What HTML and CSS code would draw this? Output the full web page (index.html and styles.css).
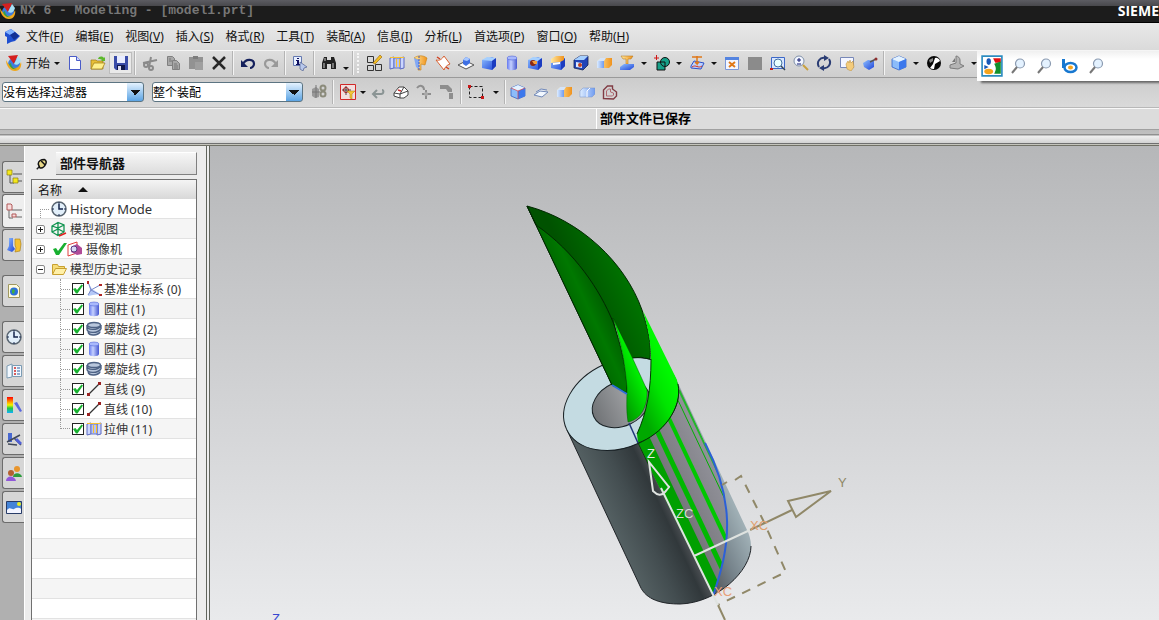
FILE: index.html
```html
<!DOCTYPE html>
<html lang="zh-CN">
<head>
  <meta charset="UTF-8">
  <meta name="viewport" content="width=device-width, initial-scale=1.0">
  <title>NX 6 - Modeling - [model1.prt]</title>
  <link rel="stylesheet" href="styles.css">
</head>
<body>
  <!-- 图标 -->
  <svg class="sprite" aria-hidden="true">
    <defs>
      <linearGradient id="gBlue" x1="0" x2="1" y1="0" y2="1"><stop offset="0" stop-color="#8fc0ff"/><stop offset="1" stop-color="#1d43d8"/></linearGradient>
      <linearGradient id="gPale" x1="0" x2="1"><stop offset="0" stop-color="#dcecff"/><stop offset="1" stop-color="#6f9bf0"/></linearGradient>
      <linearGradient id="gCyl" x1="0" x2="1"><stop offset="0" stop-color="#6478f0"/><stop offset=".4" stop-color="#c4d0ff"/><stop offset="1" stop-color="#4455d0"/></linearGradient>
      <linearGradient id="gOrange" x1="0" x2="1"><stop offset="0" stop-color="#ffe9a0"/><stop offset="1" stop-color="#f0921c"/></linearGradient>
      <linearGradient id="gRain" x1="0" x2="0" y1="0" y2="1"><stop offset="0" stop-color="#f00"/><stop offset=".35" stop-color="#ffb000"/><stop offset=".5" stop-color="#f4f400"/><stop offset=".7" stop-color="#20c840"/><stop offset="1" stop-color="#10b0ff"/></linearGradient>
    </defs>
    <symbol id="nx" viewBox="0 0 16 16"><circle cx="8" cy="9" r="6" fill="#3c7ce0"/><path d="M0 5c0 6 4 11 9 11 5 0 7-5 6-9-1 3-3 6-6 6-4 0-7-4-9-8z" fill="#f0a81c"/><path d="M3 9c1 4 4 6 8 5-3 0-6-3-6-6z" fill="#35a04a"/><path d="M2 1l10-1-4 9z" fill="#d42020"/><path d="M8 9l4-8 3 4c-1 4-4 6-7 4z" fill="#a8e0f4"/></symbol>
    <symbol id="part" viewBox="0 0 16 16"><path d="M1 4l6-3 4 3 5 4-5 5-4 1-4 2V9L1 8z" fill="#1e4fd0"/><path d="M1 4l6-3 4 3-5 3z" fill="#7fb0ff"/><path d="M6 7l5-3 4 4-5 4z" fill="#123094"/></symbol>
    <symbol id="new" viewBox="0 0 16 16"><path d="M2.500 1.500h7l4 4v9h-11z" fill="#fff" stroke="#4a5cc8"/><path d="M9.500 1.500v4h4" fill="#cfd8ff" stroke="#4a5cc8"/></symbol>
    <symbol id="open" viewBox="0 0 16 16"><path d="M1 14V5h5l1 1h6v8z" fill="#e8bf38" stroke="#9c7a14" stroke-width=".7"/><path d="M1 14l3-6h11l-3 6z" fill="#fff08c" stroke="#9c7a14" stroke-width=".7"/><path d="M8 4c1-3 4-3 6-1l1-1v4h-4l1-1c-1-1-2-1-4-1z" fill="#5cb82c"/></symbol>
    <symbol id="save" viewBox="0 0 16 16"><path d="M1 1h14v14H3l-2-2z" fill="#3a4ca8"/><path d="M4 1h8v7H4z" fill="#e8ecff"/><path d="M4 10h8v5H4z" fill="#10184c"/><path d="M5 11h3v4H5z" fill="#dde"/></symbol>
    <symbol id="cut" viewBox="0 0 16 16"><g fill="none" stroke="#8a8a8a" stroke-width="2"><path d="M1 8l14-3M9 2L7 12"/><circle cx="4" cy="10" r="2"/><circle cx="9" cy="13" r="2"/></g></symbol>
    <symbol id="copy" viewBox="0 0 16 16"><g fill="#a8a8a8" stroke="#808080"><path d="M2.500 1.500h5l2 2v7h-7z"/><path d="M7.500 5.500h4l3 3v6h-7z"/></g><path d="M9 9h3M9 11h4M9 13h4M4 4h2M4 6h3" stroke="#777"/></symbol>
    <symbol id="paste" viewBox="0 0 16 16"><path d="M1 2h14v12H1z" fill="#929292"/><path d="M5 1h5v3H5z" fill="#7c7c7c"/><path d="M7 7h8v8H7z" fill="#9f9f9f"/></symbol>
    <symbol id="del" viewBox="0 0 16 16"><path d="M2 2l12 12M14 2L2 14" stroke="#282828" stroke-width="2.500"/></symbol>
    <symbol id="undo" viewBox="0 0 16 16"><path d="M3 9c3-6 11-5 11 0 0 2-2 4-4 4" fill="none" stroke="#14205c" stroke-width="2.200"/><path d="M1 5v7h7z" fill="#14205c"/></symbol>
    <symbol id="redo" viewBox="0 0 16 16"><path d="M13 9C10 3 2 4 2 9c0 2 2 4 4 4" fill="none" stroke="#999" stroke-width="2.200"/><path d="M15 5v7H8z" fill="#999"/></symbol>
    <symbol id="info" viewBox="0 0 16 16"><path d="M1.500 1.500h8v9h-8z" fill="#e8f0ff" stroke="#6478b0"/><path d="M5 3h2v1H5zM4 5h3v4h1v1H4V9h1V6H4z" fill="#101060"/><path d="M8 7l7 5-3 1-1 3-3-2z" fill="#b8c8ec" stroke="#506090" stroke-width=".7"/></symbol>
    <symbol id="find" viewBox="0 0 16 16"><path d="M3 2h3v3h4V2h3l2 6v6h-5V9H6v5H1V8z" fill="#222"/><path d="M3 8v5M12 8v5M4 3v3" stroke="#ccc"/></symbol>
    <symbol id="sketch" viewBox="0 0 16 16"><path d="M1.500 1.500h6v6h-6zM1.500 10.500h6v5h-6zM9.500 9.500h6v6h-6z" fill="none" stroke="#333"/><path d="M7 8l7-8 2 2-7 7z" fill="#f4c020" stroke="#95600c" stroke-width=".6"/></symbol>
    <symbol id="extrude" viewBox="0 0 16 16"><path d="M1 3l4-1v11l-4 1zM11 3l4-1v11l-4 1z" fill="#cbd6ff" stroke="#5a68c0"/><path d="M5 3h6v10H5z" fill="#b4c2fa" stroke="#6a78c8"/><path d="M7 4h1v8H7zM10 4h1v8h-1zM1 2h14v1H1z" fill="#f6c030"/></symbol>
    <symbol id="revolve" viewBox="0 0 16 16"><path d="M2 3c4-3 9-3 13 0l-2 7-4-1v6H6V5z" fill="url(#gOrange)" stroke="#c78210" stroke-width=".6"/><path d="M2 3l5 2v9l-3-2z" fill="#82a8f4"/><path d="M7 1v14" stroke="#3858c8" stroke-dasharray="2 1"/></symbol>
    <symbol id="sheet" viewBox="0 0 16 16"><path d="M1 5c4 1 6-1 8-4l6 8c-3 1-5 3-6 6z" fill="#fff" stroke="#d86030"/><path d="M2 2l3 2M14 14l-3-2" stroke="#d04020" stroke-width="1.500"/></symbol>
    <symbol id="datum" viewBox="0 0 16 16"><path d="M0 10l8-4 8 4-8 4z" fill="#fff" stroke="#555"/><path d="M5 5l3-3 4 2v4l-4 3-3-2z" fill="#3f70e4"/><path d="M5 5l3-3 4 2-3 2z" fill="#a8c8ff"/></symbol>
    <symbol id="cube" viewBox="0 0 16 16"><path d="M1 5l10-3 4 2v7l-4 4-10-2z" fill="url(#gBlue)"/><path d="M1 5l5-3 9 1-4 3z" fill="#a6d0ff"/><path d="M11 6l4-3v8l-4 4z" fill="#1c3cc0"/></symbol>
    <symbol id="cyl" viewBox="0 0 16 16"><path d="M3 3v10c0 3 10 3 10 0V3z" fill="url(#gCyl)"/><ellipse cx="8" cy="3" rx="5" ry="2" fill="#a8b8fc" stroke="#5468d8" stroke-width=".6"/></symbol>
    <symbol id="hole" viewBox="0 0 16 16"><use href="#cube"/><circle cx="6" cy="8" r="3" fill="#8c2814"/><path d="M5 6h5v3H7z" fill="#f4a040"/></symbol>
    <symbol id="boss" viewBox="0 0 16 16"><use href="#cube"/><path d="M1 4l5-3h8v4l-4 2-9 1z" fill="url(#gOrange)"/><path d="M3 8l7-1v2L3 10z" fill="#fff"/></symbol>
    <symbol id="shell" viewBox="0 0 16 16"><path d="M1 5l6-4h8v9l-5 5-9-2z" fill="#2144b8" stroke="#142454" stroke-width=".8"/><path d="M1 5l6-4h8l-4 4z" fill="#a6d0ff"/><path d="M3 7l6 1v5l-6-1z" fill="#dce8ff"/><circle cx="7" cy="10" r="2" fill="#c04020"/></symbol>
    <symbol id="blend" viewBox="0 0 16 16"><path d="M1 6l3-3h12v7l-3 3H1z" fill="url(#gOrange)"/><path d="M1 6h7v7H1z" fill="url(#gPale)"/><path d="M1 6l3-3h6L8 6z" fill="#d4e4fa"/></symbol>
    <symbol id="box" viewBox="0 0 16 16"><path d="M1 7l3-3h12v6l-3 3H1z" fill="url(#gPale)" stroke="#7590c8" stroke-width=".5"/><path d="M8 13V7l3-3" stroke="#fff" fill="none"/></symbol>
    <symbol id="trim" viewBox="0 0 16 16"><path d="M2 1h12l-2 3H9v5H7V4H4z" fill="url(#gOrange)" stroke="#b07010" stroke-width=".5"/><path d="M1 12l4-3h10v3l-4 3H1z" fill="url(#gBlue)"/></symbol>
    <symbol id="bool" viewBox="0 0 16 16"><path d="M3 7h8v8H3z" fill="#16a088" stroke="#111"/><circle cx="11" cy="7" r="4.500" fill="#16a088" stroke="#111"/><path d="M6 7h5v4" fill="none" stroke="#111"/><path d="M0 3h5M2.500 0v5" stroke="#d01818"/></symbol>
    <symbol id="curve" viewBox="0 0 16 16"><path d="M2 11l3-5 10 2-3 6-10-1z" fill="#bcd2ff" stroke="#2c50c8"/><path d="M3 12c4-3 6 2 10-1" stroke="#d03020" fill="none"/><path d="M3 2h10M8 1v8l-2-2M8 9l2-2" stroke="#e07818" stroke-width="1.500" fill="none"/></symbol>
    <symbol id="fit" viewBox="0 0 16 16"><path d="M1.500 2.500h13v12h-13z" fill="#f4f6ff" stroke="#7c98d8"/><path d="M1 2h14v3H1z" fill="#5484e0"/><path d="M5 7l6 5M11 7l-6 5" stroke="#e07818" stroke-width="2"/></symbol>
    <symbol id="gray" viewBox="0 0 16 16"><path d="M1 2h14v13H1z" fill="#8b8b8b"/></symbol>
    <symbol id="zoomwin" viewBox="0 0 16 16"><path d="M1.500 2.500h13v11h-13z" fill="#d8e6ff" stroke="#3c68c8"/><circle cx="8" cy="8" r="4" fill="#eaffff" stroke="#4470a0"/><path d="M11 11l4 4" stroke="#345" stroke-width="1.500"/><path d="M0 13h3v2H0z" fill="#c02020"/></symbol>
    <symbol id="zoom" viewBox="0 0 16 16"><circle cx="6" cy="6" r="5" fill="#f2f6ff" stroke="#8090a8"/><path d="M6 3v4M4 5h4M4 9h4" stroke="#101870"/><path d="M10 10l5 5" stroke="#c8a040" stroke-width="2"/></symbol>
    <symbol id="rotate" viewBox="0 0 16 16"><path d="M3 12C0 7 4 2 9 3M13 4c3 5-1 10-6 9" fill="none" stroke="#2b3d74" stroke-width="2"/><path d="M8 0l5 3-5 3zM8 16l-5-3 5-3z" fill="#2b3d74"/></symbol>
    <symbol id="pan" viewBox="0 0 16 16"><path d="M1.500 2.500h13v10h-13z" fill="#f4f6ff" stroke="#7888b8"/><path d="M7 9l2-3 1 2 1-3 1 3 2-2 1 6-3 4-4-2z" fill="#f4cc7c" stroke="#b88830" stroke-width=".5"/></symbol>
    <symbol id="persp" viewBox="0 0 16 16"><path d="M1 8l5-3 6 1v6l-5 3-5-3z" fill="url(#gBlue)"/><path d="M8 7l6-3" stroke="#555" stroke-width="1.500"/><circle cx="14" cy="4" r="1.500" fill="#903030"/></symbol>
    <symbol id="shade" viewBox="0 0 16 16"><path d="M1 4l7-3 7 3v8l-7 3-7-3z" fill="#8cbcfa" stroke="#2456c0" stroke-width=".7"/><path d="M1 4l7-3 7 3-7 3z" fill="#e4f2ff"/><path d="M8 7l7-3v8l-7 3z" fill="#3c78ec"/></symbol>
    <symbol id="ball" viewBox="0 0 16 16"><circle cx="8" cy="8" r="7" fill="#080808"/><path d="M9 3a4 4 0 0 1 5 3l-5 3-1 5a6 6 0 0 1-4-1l3-4 1-3z" fill="#fff"/><path d="M3 5l4-2v3L4 8z" fill="#888"/></symbol>
    <symbol id="section" viewBox="0 0 16 16"><path d="M1 10l6-2V1c2 0 4 2 4 4v4l4 2-6 3-8-1z" fill="#b4b4b4" stroke="#7b7b7b"/><path d="M3 7l3-4v4z" fill="#777"/></symbol>
    <symbol id="google" viewBox="0 0 20 20"><path d="M1 1h18v18H1z" fill="#fff" stroke="#2c8cc0" stroke-width="1.500"/><path d="M11 3h7v4h-5z" fill="#e01010"/><path d="M12 8l6-2v11h-6c2-4 2-5 0-9z" fill="#12902c"/><ellipse cx="7" cy="6" rx="2" ry="3" fill="#1858b8"/><path d="M3 9l4 2-4 2z" fill="#1858b8"/><ellipse cx="7" cy="15" rx="4" ry="2.500" fill="#f4a41c"/></symbol>
    <symbol id="mag" viewBox="0 0 16 16"><circle cx="10" cy="5.500" r="4.500" fill="#e4f2ff" stroke="#8a9ab0" stroke-width="1.200"/><path d="M7 9l-5 6" stroke="#777" stroke-width="2"/></symbol>
    <symbol id="bing" viewBox="0 0 16 16"><path d="M0 1h3v9H0z" fill="#1878d0"/><ellipse cx="8.500" cy="9.500" rx="6" ry="4.500" fill="#fff" stroke="#1878d0" stroke-width="2.500"/><ellipse cx="8.500" cy="9.500" rx="2.500" ry="2" fill="#f4a41c"/></symbol>
    <symbol id="asm" viewBox="0 0 16 16"><path d="M1 5l4-2 3 2v8l-4 1-3-2z" fill="#999"/><path d="M5 1v13M1 8h8" stroke="#777"/><circle cx="12" cy="4" r="2.500" fill="none" stroke="#8b8b7b" stroke-width="2"/><circle cx="12" cy="10" r="2.500" fill="none" stroke="#8b8b7b" stroke-width="2"/></symbol>
    <symbol id="snap" viewBox="0 0 16 16"><path d="M.5.5h15v15H.5z" fill="#f2dede" stroke="#d02828"/><path d="M6 2v9M2 6h9" stroke="#444"/><circle cx="6" cy="6" r="2.500" fill="none" stroke="#a01818"/><path d="M7 7h8l-3 3v5l-2-1v-4z" fill="#f4c838" stroke="#a88010" stroke-width=".5"/></symbol>
    <symbol id="back" viewBox="0 0 16 16"><path d="M3 10h8c3 0 3-4 1-4M7 6l-4 4 4 4" fill="none" stroke="#8a9494" stroke-width="2"/></symbol>
    <symbol id="eraser" viewBox="0 0 16 16"><path d="M1 9l5-6h5l4 4v4l-4 3H7l-6-2z" fill="#fff" stroke="#444"/><path d="M1 9l6 1 4-7M7 10v4M7 10l8-3" fill="none" stroke="#444"/><path d="M5 6l3 1" stroke="#d03030" stroke-width="1.500"/></symbol>
    <symbol id="g1" viewBox="0 0 16 16"><path d="M1 4c3-4 7-2 7 2M10 6v9M6 10h9" fill="none" stroke="#8e8e8e" stroke-width="2"/><circle cx="10" cy="10" r="2" fill="#aaa"/></symbol>
    <symbol id="g2" viewBox="0 0 16 16"><path d="M1 1h8l4 4v3H9L7 5H1zM10 9h4v6h-4z" fill="#8e8e8e"/></symbol>
    <symbol id="rectsel" viewBox="0 0 16 16"><path d="M1.500 2.500h13v11h-13z" fill="none" stroke="#222" stroke-dasharray="3 2"/><path d="M0 1h3v3H0zM13 12h3v3h-3z" fill="#c81818"/></symbol>
    <symbol id="cubeo" viewBox="0 0 16 16"><use href="#shade"/><path d="M1 4l7 3 7-3M8 7v8" stroke="#d84040" fill="none" stroke-width=".7"/></symbol>
    <symbol id="face" viewBox="0 0 16 16"><path d="M1 11l6-4 8 1-6 5zM3 8l5-3 6 1" fill="#f2f8ff" stroke="#7088b8"/></symbol>
    <symbol id="contour" viewBox="0 0 16 16"><path d="M1.500 14.500V6l4-4h5v3l4 3v4l-3 3z" fill="none" stroke="#803c44" stroke-width="1.400"/><path d="M4.500 12V7l2-2h2v3l3 1v2l-1 1z" fill="none" stroke="#b06870"/></symbol>
    <symbol id="clock" viewBox="0 0 16 16"><circle cx="8" cy="8" r="7" fill="#e2effa" stroke="#5a6672" stroke-width="1.500"/><path d="M8 3v5h4" fill="none" stroke="#16264c" stroke-width="1.500"/><path d="M8 1v2M8 13v2M1 8h2M13 8h2" stroke="#16264c"/></symbol>
    <symbol id="views" viewBox="0 0 16 16"><path d="M1 5l6-3.500L13 4v7l-6 3.500L1 11zM1 5l6 2 6-3M7 1.500v13M1 11l6-3 6 3" fill="none" stroke="#109450" stroke-width="1.300"/><path d="M8 15l7-3" stroke="#e02020" stroke-width="1.500"/></symbol>
    <symbol id="camera" viewBox="0 0 16 16"><path d="M1 4l9-3v11l-9 3z" fill="#fff" stroke="#e04040"/><path d="M4 6l6-3 5 4v6l-5 1-6-3z" fill="#b04c98"/><circle cx="7" cy="8" r="3" fill="#d8d8f4" stroke="#583c84"/></symbol>
    <symbol id="folder" viewBox="0 0 16 16"><path d="M1.500 13V3.500h5l1 2h6V8" fill="#f6dc78" stroke="#c8a030"/><path d="M1.500 13.500l3-6h11l-3 6z" fill="#fff0a8" stroke="#c8a030"/></symbol>
    <symbol id="csys" viewBox="0 0 16 16"><path d="M3 3l3 5 8 5-7 1-5 1 2-6z" fill="#b4c8f8"/><path d="M2 1l3 8 9-5M5 9l9 5M5 9l-3 5" fill="none" stroke="#7888c8"/><path d="M1 0h2v3H1zM13 3h3v2h-3zM13 13h3v2h-3z" fill="#b02828"/></symbol>
    <symbol id="helix" viewBox="0 0 16 16"><path d="M1 4c2-4 13-4 14 0v7c-2 5-12 4-13 0z" fill="#b8c6dc"/><g fill="none" stroke="#4d6184" stroke-width="1.400"><ellipse cx="8" cy="4" rx="6.500" ry="2.500"/><path d="M1 5c0 4 10 5 14 0M1 8c0 4 10 5 14 0M2 11c1 4 9 4 12 0M1 4v4M15 4v4"/></g></symbol>
    <symbol id="line" viewBox="0 0 16 16"><path d="M2 14L14 2" stroke="#333" stroke-width="1.300"/><path d="M1 12h3v3H1zM12 1h3v3h-3z" fill="#982020"/></symbol>
    <symbol id="tick" viewBox="0 0 16 16"><path d="M2 8l3-1 2 3 6-8h3L8 14H5z" fill="#18b030"/></symbol>
    <symbol id="pin" viewBox="0 0 16 16"><path d="M1 15l4-4" stroke="#222" stroke-width="2"/><path d="M3 8c0-4 4-6 8-6 3 1 3 4 2 6-2 4-5 6-8 5z" fill="#e8d888" stroke="#111" stroke-width="2"/><path d="M7 4l5 5" stroke="#111" stroke-width="2"/></symbol>
    <symbol id="nav1" viewBox="0 0 16 16"><path d="M4 6v8h4M7 5h9M10 12h6" stroke="#555" fill="none"/><path d="M1 1h5v5H1zM7 9h5v5H7z" fill="#f4e81c" stroke="#8a8010" stroke-width=".7"/></symbol>
    <symbol id="nav2" viewBox="0 0 16 16"><path d="M3 6v9h4M6 7h10M10 14h6" stroke="#666" fill="none"/><path d="M1 1h4l1 1v5H1z" fill="#f8dcdc" stroke="#b05858"/><path d="M6 11h4v3H6z" fill="#f8dcdc" stroke="#b05858"/></symbol>
    <symbol id="reuse" viewBox="0 0 16 16"><path d="M3 1h4v8l2 3-3 3-5-2 2-4z" fill="url(#gBlue)"/><path d="M9 2h5l1 5-1 7-5 1 1-4-1-3z" fill="#f4c030" stroke="#a87c10" stroke-width=".6"/></symbol>
    <symbol id="web" viewBox="0 0 16 16"><path d="M2.500 1.500h8l3 3v10h-11z" fill="#fffce0" stroke="#a09860"/><circle cx="8" cy="8.500" r="4" fill="#2c70dc"/><path d="M6 6l3 1-1 4-2-1z" fill="#40b040"/></symbol>
    <symbol id="roles" viewBox="0 0 16 16"><path d="M1 3l5-2v13l-5 1zM6.500 2.500h9v11h-9z" fill="#f2f8ff" stroke="#7c9cb4"/><path d="M8 5h2M8 8h2M8 11h2" stroke="#d02828" stroke-width="1.500"/><path d="M11 5h3M11 8h3M11 11h3" stroke="#3060a0"/></symbol>
    <symbol id="rain" viewBox="0 0 16 16"><path d="M1 0h6v16H1z" fill="url(#gRain)"/><path d="M8 6l3-1 5 9-2 1z" fill="#5a68e0"/></symbol>
    <symbol id="tools" viewBox="0 0 16 16"><path d="M2 2h4v9H2z" fill="#4868d0"/><path d="M1 11l13-7M8 7l7 7M2 13l9 1" stroke="#404858" stroke-width="1.500"/><path d="M10 8l5 5" stroke="#5060d8" stroke-width="3"/></symbol>
    <symbol id="people" viewBox="0 0 16 16"><circle cx="11" cy="4" r="3" fill="#e8952c"/><path d="M7 12c0-5 8-5 9 0z" fill="#2c9c3c"/><circle cx="5" cy="8" r="3" fill="#b46030"/><path d="M0 16c0-6 9-6 10 0z" fill="#9058d8"/></symbol>
    <symbol id="image" viewBox="0 0 16 16"><path d="M.5 2.500h15v12H.5z" fill="#4484d8" stroke="#283c68"/><path d="M1 11c3-4 5 0 7-1s5-2 7 0v4H1z" fill="#f2f4ff"/><circle cx="13" cy="5" r="2" fill="#e8f020"/></symbol>
  </svg>

  <div class="app">
    <header class="title-bar">
      <svg class="icon"><use href="#nx"/></svg>
      <h1>NX 6 - Modeling - [model1.prt]</h1>
      <span class="brand">SIEME</span>
    </header>

    <nav class="menu-bar">
      <svg class="icon"><use href="#part"/></svg>
      <button>文件(<u>F</u>)</button>
      <button>编辑(<u>E</u>)</button>
      <button>视图(<u>V</u>)</button>
      <button>插入(<u>S</u>)</button>
      <button>格式(<u>R</u>)</button>
      <button>工具(<u>T</u>)</button>
      <button>装配(<u>A</u>)</button>
      <button>信息(<u>I</u>)</button>
      <button>分析(<u>L</u>)</button>
      <button>首选项(<u>P</u>)</button>
      <button>窗口(<u>O</u>)</button>
      <button>帮助(<u>H</u>)</button>
    </nav>

    <div class="toolbar main-toolbar">
      <button class="start"><svg class="icon"><use href="#nx"/></svg>开始<i class="arrow"></i></button>
      <button class="tool" aria-label="新建"><svg class="icon"><use href="#new"/></svg></button>
      <button class="tool" aria-label="打开"><svg class="icon"><use href="#open"/></svg></button>
      <button class="tool framed" aria-label="保存"><svg class="icon"><use href="#save"/></svg></button>
      <i class="sep"></i>
      <button class="tool" aria-label="剪切"><svg class="icon"><use href="#cut"/></svg></button>
      <button class="tool" aria-label="复制"><svg class="icon"><use href="#copy"/></svg></button>
      <button class="tool" aria-label="粘贴"><svg class="icon"><use href="#paste"/></svg></button>
      <button class="tool" aria-label="删除"><svg class="icon"><use href="#del"/></svg></button>
      <i class="sep"></i>
      <button class="tool" aria-label="撤销"><svg class="icon"><use href="#undo"/></svg></button>
      <button class="tool" aria-label="重做"><svg class="icon"><use href="#redo"/></svg></button>
      <i class="sep"></i>
      <button class="tool" aria-label="对象信息"><svg class="icon"><use href="#info"/></svg></button>
      <i class="sep"></i>
      <button class="tool" aria-label="命令查找器"><svg class="icon"><use href="#find"/></svg></button>
      <button class="more" aria-label="工具条选项"><i class="arrow low"></i></button>
      <i class="sep tight"></i>
      <i class="grip"></i>
      <button class="tool" aria-label="草图"><svg class="icon"><use href="#sketch"/></svg></button>
      <button class="tool" aria-label="拉伸"><svg class="icon"><use href="#extrude"/></svg></button>
      <button class="tool" aria-label="回转"><svg class="icon"><use href="#revolve"/></svg></button>
      <button class="tool" aria-label="片体"><svg class="icon"><use href="#sheet"/></svg></button>
      <button class="tool" aria-label="基准平面"><svg class="icon"><use href="#datum"/></svg></button>
      <button class="tool" aria-label="长方体"><svg class="icon"><use href="#cube"/></svg></button>
      <button class="tool" aria-label="圆柱"><svg class="icon"><use href="#cyl"/></svg></button>
      <button class="tool" aria-label="孔"><svg class="icon"><use href="#hole"/></svg></button>
      <button class="tool" aria-label="凸台"><svg class="icon"><use href="#boss"/></svg></button>
      <button class="tool" aria-label="抽壳"><svg class="icon"><use href="#shell"/></svg></button>
      <button class="tool" aria-label="边倒圆"><svg class="icon"><use href="#blend"/></svg></button>
      <button class="tool" aria-label="修剪体"><svg class="icon"><use href="#trim"/></svg></button>
      <button class="more" aria-label="更多修剪"><i class="arrow"></i></button>
      <button class="tool" aria-label="求和"><svg class="icon"><use href="#bool"/></svg></button>
      <button class="more" aria-label="更多布尔"><i class="arrow"></i></button>
      <button class="tool" aria-label="投影曲线"><svg class="icon"><use href="#curve"/></svg></button>
      <button class="more" aria-label="更多曲线"><i class="arrow"></i></button>
      <button class="tool" aria-label="适合窗口"><svg class="icon"><use href="#fit"/></svg></button>
      <button class="tool" aria-label="适合选择"><svg class="icon"><use href="#gray"/></svg></button>
      <button class="tool" aria-label="窗口缩放"><svg class="icon"><use href="#zoomwin"/></svg></button>
      <button class="tool" aria-label="缩放"><svg class="icon"><use href="#zoom"/></svg></button>
      <button class="tool" aria-label="旋转"><svg class="icon"><use href="#rotate"/></svg></button>
      <button class="tool" aria-label="平移"><svg class="icon"><use href="#pan"/></svg></button>
      <button class="tool" aria-label="透视"><svg class="icon"><use href="#persp"/></svg></button>
      <i class="sep"></i>
      <button class="tool" aria-label="带边着色"><svg class="icon"><use href="#shade"/></svg></button>
      <button class="more" aria-label="渲染样式"><i class="arrow"></i></button>
      <button class="tool" aria-label="背景"><svg class="icon"><use href="#ball"/></svg></button>
      <button class="tool" aria-label="剪切截面"><svg class="icon"><use href="#section"/></svg></button>
      <button class="more" aria-label="截面选项"><i class="arrow"></i></button>
      <div class="search-bar">
        <button aria-label="Google"><svg class="icon big"><use href="#google"/></svg></button>
        <button aria-label="搜索一"><svg class="icon"><use href="#mag"/></svg></button>
        <button aria-label="搜索二"><svg class="icon"><use href="#mag"/></svg></button>
        <button aria-label="Bing"><svg class="icon"><use href="#bing"/></svg></button>
        <button aria-label="搜索三"><svg class="icon"><use href="#mag"/></svg></button>
      </div>
    </div>

    <div class="toolbar select-toolbar">
      <select class="filter" aria-label="类型过滤器"><option>没有选择过滤器</option></select>
      <select class="scope" aria-label="选择范围"><option>整个装配</option></select>
      <button class="tool" aria-label="装配约束"><svg class="icon"><use href="#asm"/></svg></button>
      <i class="sep"></i>
      <button class="tool" aria-label="捕捉点"><svg class="icon"><use href="#snap"/></svg></button>
      <button class="more slim" aria-label="捕捉选项"><i class="arrow"></i></button>
      <button class="tool" aria-label="返回"><svg class="icon"><use href="#back"/></svg></button>
      <button class="tool" aria-label="取消选择"><svg class="icon"><use href="#eraser"/></svg></button>
      <button class="tool" aria-label="查找"><svg class="icon"><use href="#g1"/></svg></button>
      <button class="tool" aria-label="高亮"><svg class="icon"><use href="#g2"/></svg></button>
      <i class="sep"></i>
      <button class="tool" aria-label="矩形选择"><svg class="icon"><use href="#rectsel"/></svg></button>
      <button class="more wide" aria-label="选择方式"><i class="arrow"></i></button>
      <i class="sep tight"></i>
      <button class="tool" aria-label="体"><svg class="icon"><use href="#cubeo"/></svg></button>
      <button class="tool" aria-label="面"><svg class="icon"><use href="#face"/></svg></button>
      <button class="tool" aria-label="特征"><svg class="icon"><use href="#blend"/></svg></button>
      <button class="tool" aria-label="组件"><svg class="icon"><use href="#box"/></svg></button>
      <button class="tool" aria-label="轮廓"><svg class="icon"><use href="#contour"/></svg></button>
    </div>

    <div class="status-bar">
      <div class="cue"></div>
      <output class="status">部件文件已保存</output>
    </div>
    <div class="dock-edge"></div>

    <div class="workspace">
      <div class="resource-bar">
        <button aria-label="装配导航器"><svg class="icon"><use href="#nav1"/></svg></button>
        <button class="active" aria-label="部件导航器"><svg class="icon"><use href="#nav2"/></svg></button>
        <button aria-label="重用库"><svg class="icon"><use href="#reuse"/></svg></button>
        <button class="apart" aria-label="浏览器"><svg class="icon"><use href="#web"/></svg></button>
        <button class="apart" aria-label="历史记录"><svg class="icon"><use href="#clock"/></svg></button>
        <button aria-label="角色"><svg class="icon"><use href="#roles"/></svg></button>
        <button aria-label="系统材料"><svg class="icon"><use href="#rain"/></svg></button>
        <button aria-label="加工向导"><svg class="icon"><use href="#tools"/></svg></button>
        <button aria-label="用户"><svg class="icon"><use href="#people"/></svg></button>
        <button aria-label="系统场景"><svg class="icon"><use href="#image"/></svg></button>
      </div>

      <aside class="navigator">
        <div class="nav-head">
          <svg class="icon small"><use href="#pin"/></svg>
          <h2>部件导航器</h2>
        </div>
        <div class="nav-body">
          <button class="column-head">名称<i class="sort"></i></button>
          <ul class="tree">
            <li><i class="node"></i><svg class="icon"><use href="#clock"/></svg><span class="latin">History Mode</span></li>
            <li><button class="node plus" aria-label="展开"></button><svg class="icon"><use href="#views"/></svg><span>模型视图</span></li>
            <li><button class="node plus" aria-label="展开"></button><svg class="icon"><use href="#tick"/></svg><svg class="icon"><use href="#camera"/></svg><span>摄像机</span></li>
            <li><button class="node minus" aria-label="折叠"></button><svg class="icon"><use href="#folder"/></svg><span>模型历史记录</span></li>
            <li class="child"><input type="checkbox" id="f0" checked><svg class="icon"><use href="#csys"/></svg><label for="f0">基准坐标系 (0)</label></li>
            <li class="child"><input type="checkbox" id="f1" checked><svg class="icon"><use href="#cyl"/></svg><label for="f1">圆柱 (1)</label></li>
            <li class="child"><input type="checkbox" id="f2" checked><svg class="icon"><use href="#helix"/></svg><label for="f2">螺旋线 (2)</label></li>
            <li class="child"><input type="checkbox" id="f3" checked><svg class="icon"><use href="#cyl"/></svg><label for="f3">圆柱 (3)</label></li>
            <li class="child"><input type="checkbox" id="f7" checked><svg class="icon"><use href="#helix"/></svg><label for="f7">螺旋线 (7)</label></li>
            <li class="child"><input type="checkbox" id="f9" checked><svg class="icon"><use href="#line"/></svg><label for="f9">直线 (9)</label></li>
            <li class="child"><input type="checkbox" id="f10" checked><svg class="icon"><use href="#line"/></svg><label for="f10">直线 (10)</label></li>
            <li class="child last"><input type="checkbox" id="f11" checked><svg class="icon"><use href="#extrude"/></svg><label for="f11">拉伸 (11)</label></li>
          </ul>
        </div>
      </aside>

      <main class="viewport">
        <svg class="model" viewBox="210 146 949 474" preserveAspectRatio="xMidYMin meet">
          <defs>
            <linearGradient id="body" gradientUnits="userSpaceOnUse" x1="601" y1="510" x2="712" y2="458">
              <stop offset="0" stop-color="#566264"/><stop offset=".25" stop-color="#434d50"/><stop offset=".45" stop-color="#31383b"/>
              <stop offset=".56" stop-color="#55585c"/><stop offset=".75" stop-color="#75828a"/><stop offset="1" stop-color="#9fafb5"/>
            </linearGradient>
            <linearGradient id="inner" gradientUnits="userSpaceOnUse" x1="641" y1="470" x2="704" y2="440">
              <stop offset="0" stop-color="#66666a"/><stop offset=".5" stop-color="#808086"/><stop offset="1" stop-color="#92929a"/>
            </linearGradient>
            <linearGradient id="bore" x1="0" x2="1"><stop offset="0" stop-color="#707376"/><stop offset=".6" stop-color="#999b9e"/><stop offset="1" stop-color="#6c6f72"/></linearGradient>
            <linearGradient id="leafL" gradientUnits="userSpaceOnUse" x1="560" y1="300" x2="605" y2="279"><stop offset="0" stop-color="#006000"/><stop offset=".45" stop-color="#007800"/><stop offset="1" stop-color="#005000"/></linearGradient>
            <linearGradient id="leafR" gradientUnits="userSpaceOnUse" x1="580" y1="290" x2="625" y2="269"><stop offset="0" stop-color="#005200"/><stop offset="1" stop-color="#007400"/></linearGradient>
            <linearGradient id="lime" gradientUnits="userSpaceOnUse" x1="640" y1="410" x2="678" y2="392"><stop offset="0" stop-color="#00a800"/><stop offset=".6" stop-color="#00e400"/><stop offset="1" stop-color="#00f800"/></linearGradient>
            <linearGradient id="lime2" gradientUnits="userSpaceOnUse" x1="622" y1="400" x2="646" y2="389"><stop offset="0" stop-color="#00a000"/><stop offset="1" stop-color="#00f000"/></linearGradient>
            <clipPath id="strip"><path d="M637 442C660 433 677 411 679 386L705 443C717 466 726 493 727 520C728 548 721 572 713 596Z"/></clipPath>
          </defs>

          <!-- 圆柱体 -->
          <path d="M567 430L640 586C646 600 662 604 680 604C717 603 751 571 751 546C751 540 749 534 747 530L678 383Z" fill="url(#body)"/>
          <path d="M567 430L640 586C646 600 662 604 680 604C717 603 751 571 751 546" fill="none" stroke="#202428"/>
          <g clip-path="url(#strip)">
            <path d="M630 370h110v240H630z" fill="url(#inner)"/>
            <path d="M632 432L648 434L722 590L712 598Z" fill="#00a000"/>
            <path d="M652 420L731 587" stroke="#00b800" stroke-width="5"/>
            <path d="M666 412L741 571" stroke="#00c800" stroke-width="4"/>
            <path d="M675 394L740 531" stroke="#00b000"/>
            <path d="M679 390L740 519" stroke="#20b828" stroke-width="2"/>
          </g>
          <path d="M705 443C717 466 726 493 727 520C728 548 721 572 713 596" fill="none" stroke="#2c60d8" stroke-width="2"/>

          <!-- 端面 -->
          <ellipse cx="621" cy="404" rx="60" ry="43" transform="rotate(-25 621 404)" fill="#c4dbe2" stroke="#182024"/>
          <ellipse cx="621" cy="404" rx="30" ry="22" transform="rotate(-25 621 404)" fill="url(#bore)" stroke="#182024"/>

          <!-- 螺旋叶片 -->
          <path d="M527 206C580 220 625 262 642 310C650 335 651 348 650 359Q641 356 632 358L613 318L627 385V393L612 385Z" fill="url(#leafR)" stroke="#002800"/>
          <path d="M527 206L536 225C575 252 600 290 613 322C621 345 627 370 627 393L612 385Z" fill="url(#leafL)" stroke="#002800"/>
          <path d="M613 318L632 357L647 390C648 407 640 420 628 422C626 410 627 399 627 388C625 362 621 342 613 318Z" fill="url(#lime2)" stroke="#006000" stroke-width=".5"/>
          <path d="M643 311L677 380C684 409 661 435 638 443L637 434C647 412 651 390 651 359C651 342 648 328 643 311Z" fill="url(#lime)"/>
          <path d="M678 384C683 409 661 435 638 443M651 359C651 390 647 412 637 434" fill="none" stroke="#003800"/>
          <path d="M612 385L627 394" stroke="#2c70d8" stroke-width="2"/>
          <path d="M629 423L638 443" stroke="#203878" stroke-width="1.500"/>
          <path d="M638 443L650 468" stroke="#183018"/>

          <!-- 坐标系 -->
          <g fill="none" stroke="#908868" stroke-width="2">
            <path d="M718 605L725 620M750 530L792 510M788 501L831 491L796 517Z"/>
            <path d="M735 480L741 476L763 520L786 572L718 605M722 485L727 482" stroke-dasharray="9 8"/>
          </g>
          <path d="M649 462L653 491Q660 498 665 492T669 487ZM661 488L718 605M694 556L750 530" fill="none" stroke="#dfe3e0" stroke-width="2"/>
          <g class="axis-text">
            <text x="647" y="458" fill="#e8eee8">Z</text>
            <text x="676" y="518" fill="#d4dcd4">ZC</text>
            <text x="838" y="487" fill="#908868">Y</text>
            <text x="750" y="530" fill="#e0a070">XC</text>
            <text x="714" y="596" fill="#e8a078">XC</text>
            <text x="272" y="623" fill="#3848d0">Z</text>
          </g>
        </svg>
      </main>
    </div>
  </div>
</body>
</html>
```

FILE: styles.css
```css
* {
  box-sizing: border-box;
}
body {
  margin: 0;
  font-family: "Noto Sans", "Noto Sans CJK SC", sans-serif;
  font-size: 12px;
  color: #111111;
  background-color: #e0e0e0;
}
button {
  margin: 0;
  padding: 0;
  border: 0;
  background: none;
  font: inherit;
  color: inherit;
}
/* 不能用 display: none，否则渐变失效 */
.sprite {
  position: absolute;
  width: 0;
  height: 0;
}
.icon {
  width: 16px;
  height: 16px;
  flex: none;
  display: block;
}
.icon.small {
  width: 12px;
  height: 12px;
}
.icon.big {
  width: 22px;
  height: 22px;
}
.app {
  height: 100vh;
  display: flex;
  flex-direction: column;
  overflow: hidden;
}

/* 标题栏 */
.title-bar {
  height: 23px;
  flex: none;
  display: flex;
  align-items: center;
  gap: 4px;
  padding-bottom: 2px;
  background: linear-gradient(#5c5c62 0, #48484c 6px, #1c1c1c 6px, #1c1c1c 22px, #000000 22px);
}
.title-bar h1 {
  flex: 1;
  margin: 0;
  font: bold 13px/20px "Liberation Mono", monospace;
  color: #777777;
  white-space: nowrap;
}
.brand {
  font: bold 14px/20px "Open Sans", sans-serif;
  color: #ffffff;
}

/* 菜单栏 */
.menu-bar {
  height: 27px;
  flex: none;
  display: flex;
  align-items: center;
  gap: 12px;
  padding: 0 0 2px 4px;
  background: linear-gradient(#e9e9e9, #dadada);
  white-space: nowrap;
}
.menu-bar .icon {
  margin-right: -6px;
}

/* 工具条 */
.toolbar {
  position: relative;
  flex: none;
  display: flex;
  align-items: center;
  white-space: nowrap;
}
.main-toolbar {
  height: 28px;
  padding: 0 0 2px 6px;
  border-top: 1px solid #f6f6f6;
  border-bottom: 1px solid #9a9a9a;
  background: linear-gradient(#dedede, #cecece);
}
.select-toolbar {
  height: 30px;
  padding-bottom: 1px;
  border-bottom: 1px solid #b8b8b8;
  background: linear-gradient(#cccccc, #dadada);
}
.start {
  display: flex;
  align-items: center;
  gap: 4px;
  width: 57px;
}
.tool {
  width: 23px;
  height: 22px;
  flex: none;
  display: flex;
  align-items: center;
  justify-content: center;
}
.framed {
  border: 1px solid #bdbdbd;
  background-color: #e9e9e9;
}
.more {
  width: 12px;
  height: 22px;
  flex: none;
  display: flex;
  align-items: center;
  justify-content: center;
}
.more.slim {
  width: 7px;
}
.more.wide {
  width: 17px;
}
.arrow {
  border: 3px solid transparent;
  border-top-color: #111111;
  border-bottom: 0;
}
.arrow.low {
  margin-top: 10px;
}
.sep {
  width: 2px;
  height: 24px;
  flex: none;
  margin: 0 2px;
  border-left: 1px solid #b4b4b4;
  border-right: 1px solid #f4f4f4;
}
.sep.tight {
  margin: 0;
}
.grip {
  width: 2px;
  height: 20px;
  flex: none;
  margin: 0 3px;
  border-left: 2px dotted #f6f6f6;
}
.search-bar {
  position: absolute;
  top: 0;
  left: 977px;
  right: 0;
  height: 30px;
  display: flex;
  align-items: center;
  gap: 10px;
  padding-left: 4px;
  background: linear-gradient(#f0f0f0, #ffffff 8px);
  box-shadow: 4px 2px 2px rgba(0, 0, 0, 0.5);
  z-index: 1;
}
.search-bar button:first-child {
  margin-right: -3px;
}
select {
  height: 20px;
  flex: none;
  padding: 0;
  border: 1px solid #5c7482;
  border-radius: 3px;
  appearance: none;
  font: inherit;
  color: #000000;
  background:
    conic-gradient(from -45deg at 50% 100%, #111111 90deg, transparent 0) right 3px top 7px / 10px 5px no-repeat,
    linear-gradient(#e4f2ff, #5ca4e4) right / 16px 100% no-repeat,
    #ffffff;
}
.filter {
  width: 142px;
  margin: 0 8px 0 2px;
}
.scope {
  width: 151px;
  margin-right: 4px;
}
/* 下拉箭头朝下 */
select {
  background:
    conic-gradient(from -45deg at 50% 100%, #111111 90deg, transparent 0) right 3px top 7px / 10px 5px no-repeat,
    linear-gradient(#e4f2ff, #5ca4e4) right / 16px 100% no-repeat,
    #ffffff;
}

/* 状态栏 */
.status-bar {
  height: 21px;
  flex: none;
  display: flex;
  background-color: #dcdcdc;
  border-top: 1px solid #f8f8f8;
}
.cue {
  width: 597px;
  border-right: 1px solid #ffffff;
}
.status {
  padding-left: 3px;
  font-size: 13px;
  font-weight: bold;
  line-height: 18px;
  color: #000000;
}
.dock-edge {
  height: 17px;
  flex: none;
  background: linear-gradient(#a0a0a0 1px, #bcbcbc 1px, #c0c0c0 5px, #909090 5px, #909090 6px, #f0f0f0 7px, #d2d2d2 14px, #707070 14px, #707070 15px, #c4c4bc 15px, #c4c4bc 16px, #707066 16px);
}

/* 工作区 */
.workspace {
  flex: 1;
  min-height: 0;
  display: flex;
}
.resource-bar {
  width: 24px;
  flex: none;
  display: flex;
  flex-direction: column;
  gap: 2px;
  padding: 15px 0 0 2px;
  background-color: #b0b0b0;
}
.resource-bar button {
  height: 32px;
  flex: none;
  padding-left: 3px;
  border: 1px solid #6c6c6c;
  border-right: 0;
  border-radius: 3px 0 0 3px;
  background-color: #d6d6d6;
}
.resource-bar .active {
  height: 34px;
  margin: -1px 0;
  background-color: #eeeeee;
}
.resource-bar .apart {
  margin-top: 12px;
}
.navigator {
  width: 186px;
  flex: none;
  display: flex;
  flex-direction: column;
  padding: 6px 9px 0 6px;
  border-left: 1px solid #ffffff;
  border-right: 4px double #60645c;
  background-color: #ececec;
}
.nav-head {
  display: flex;
  align-items: center;
  gap: 8px;
  height: 23px;
  margin-bottom: 4px;
  padding-left: 5px;
}
.nav-head h2 {
  flex: 1;
  margin: 0;
  padding-left: 4px;
  font-size: 13px;
  line-height: 21px;
  border-top: 1px solid #ffffff;
  border-right: 1px solid #808080;
  border-bottom: 1px solid #808080;
  background: linear-gradient(#f6f6f6, #dcdcdc);
}
.nav-body {
  flex: 1;
  min-height: 0;
  display: flex;
  flex-direction: column;
  border: 1px solid #707070;
  border-bottom: 0;
}
.column-head {
  height: 19px;
  flex: none;
  display: flex;
  align-items: center;
  gap: 16px;
  padding-left: 6px;
  background: linear-gradient(#f4f4f4, #d8d8d8);
}
.sort {
  border: 5px solid transparent;
  border-bottom-color: #111111;
  border-top: 0;
}
.tree {
  flex: 1;
  margin: 0;
  padding: 0;
  list-style: none;
  background: repeating-linear-gradient(#ffffff 0, #ffffff 19px, #e2e2e2 19px, #e2e2e2 20px, #f5f5f5 20px, #f5f5f5 39px, #e2e2e2 39px, #e2e2e2 40px);
}
.tree li {
  display: flex;
  align-items: center;
  height: 20px;
  padding-left: 4px;
  color: #333333;
  white-space: nowrap;
}
.tree span {
  padding-left: 3px;
}
.tree label {
  padding-left: 2px;
}
.tree .latin {
  font-size: 13px;
}
.node {
  width: 9px;
  height: 9px;
  flex: none;
  margin-right: 6px;
}
.node:not(button) {
  border-top: 1px dotted #999999;
  border-left: 1px dotted #999999;
  margin: 9px 2px 0 4px;
}
.plus,
.minus {
  border: 1px solid #888888;
  border-radius: 2px;
  background: linear-gradient(#222222, #222222) center / 5px 1px no-repeat, #ffffff;
}
.plus {
  background: linear-gradient(#222222, #222222) center / 5px 1px no-repeat, linear-gradient(#222222, #222222) center / 1px 5px no-repeat, #ffffff;
}
.tree .child {
  padding-left: 28px;
}
.child::before {
  content: "";
  width: 10px;
  height: 20px;
  flex: none;
  border-left: 1px dotted #999999;
  background: repeating-linear-gradient(90deg, #999999 0 1px, transparent 1px 2px) center / 100% 1px no-repeat;
}
.last::before {
  height: 10px;
  align-self: flex-start;
  background-position: bottom;
}
.tree input {
  width: 12px;
  height: 12px;
  flex: none;
  margin: 0 2px 0 1px;
  appearance: none;
  border: 1px solid #222222;
  background-color: #ffffff;
}
.tree input:checked::before {
  content: "";
  display: block;
  width: 10px;
  height: 10px;
  background-color: #18b030;
  clip-path: polygon(0 50%, 25% 40%, 40% 60%, 85% 5%, 100% 15%, 45% 95%, 30% 95%);
}
.viewport {
  flex: 1;
  min-width: 0;
  overflow: hidden;
  background: linear-gradient(#b6b7b9, #d0d1d3 50%, #e9eaec);
}
.model {
  display: block;
  width: 100%;
}
.axis-text {
  font: 13px "Liberation Sans", sans-serif;
}
```
